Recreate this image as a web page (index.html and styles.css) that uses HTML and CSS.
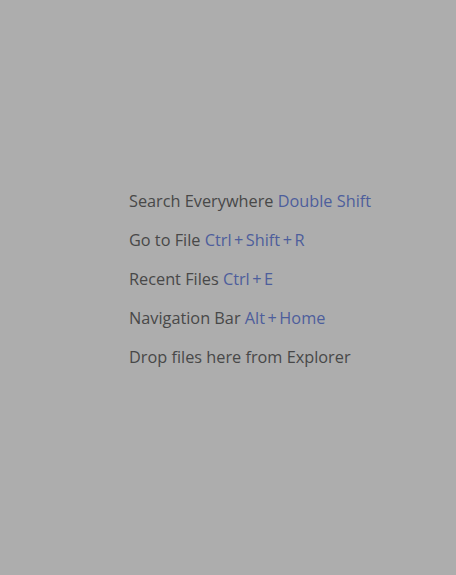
FILE: index.html
```html
<!DOCTYPE html>
<html>
<head>
<meta charset="utf-8">
<link rel="stylesheet" href="styles.css">
</head>
<body>
<div class="hints">
  <div class="hint">Search Everywhere <span class="key">Double Shift</span></div>
  <div class="hint">Go to File <span class="key">Ctrl<span class="plus">+</span>Shift<span class="plus">+</span>R</span></div>
  <div class="hint">Recent Files <span class="key">Ctrl<span class="plus">+</span>E</span></div>
  <div class="hint">Navigation Bar <span class="key">Alt<span class="plus">+</span>Home</span></div>
  <div class="hint">Drop files here from Explorer</div>
</div>
</body>
</html>
```
FILE: styles.css
```css
html, body {
  margin: 0;
  padding: 0;
  width: 456px;
  height: 575px;
  background: #adadad;
  overflow: hidden;
}
.hints {
  display: flex;
  flex-direction: column;
  gap: 17px;
  padding: 190px 0 0 129px;
  font-family: "Open Sans", "Noto Sans", sans-serif;
  font-size: 16.3px;
  line-height: 22px;
  color: #484848;
}
.hint {
  white-space: nowrap;
}
.key {
  color: #4d5e9c;
}
.plus {
  margin: 0 2.5px;
}
```
